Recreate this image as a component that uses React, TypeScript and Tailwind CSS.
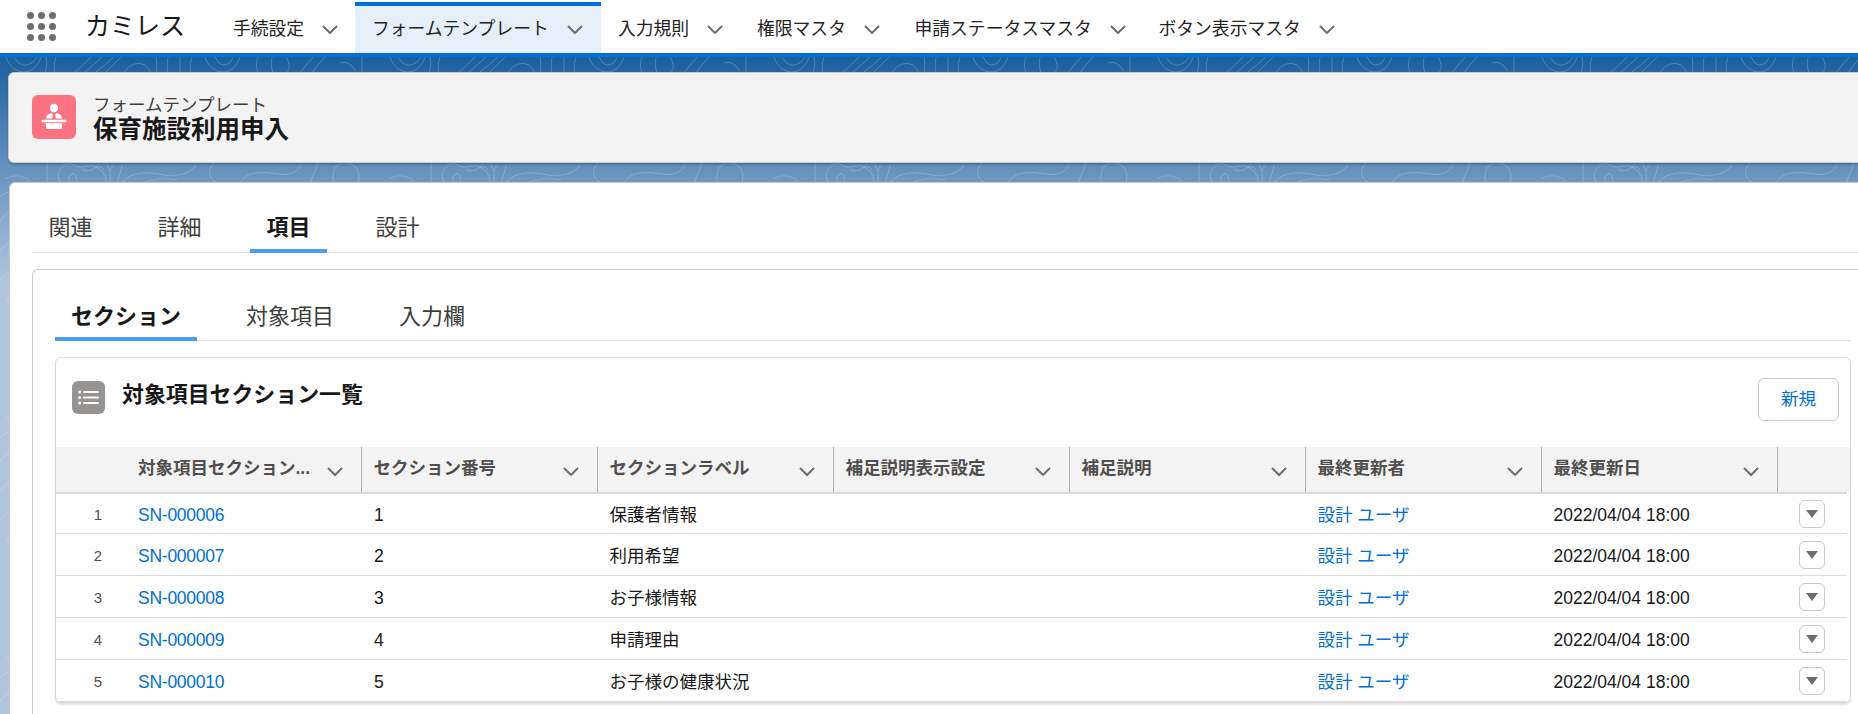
const navItems = [
  { label: "手続設定", cls: "w-[140px] pl-[18px] gap-[18px]" },
  { label: "フォームテンプレート", cls: "w-[246px] pl-[17px] gap-[18px]" },
  { label: "入力規則", cls: "w-[138px] pl-[17px] gap-[18px]" },
  { label: "権限マスタ", cls: "w-[157.500px] pl-[18px] gap-[18px]" },
  { label: "申請ステータスマスタ", cls: "w-[244px] pl-[18px] gap-[18px]" },
  { label: "ボタン表示マスタ", cls: "w-[211px] pl-[18px] gap-[18px]" },
];
const columns = ["セクション番号", "セクションラベル", "補足説明表示設定", "補足説明", "最終更新者", "最終更新日"];
const rows = [
  { no: 1, id: "SN-000006", num: "1", label: "保護者情報" },
  { no: 2, id: "SN-000007", num: "2", label: "利用希望" },
  { no: 3, id: "SN-000008", num: "3", label: "お子様情報" },
  { no: 4, id: "SN-000009", num: "4", label: "申請理由" },
  { no: 5, id: "SN-000010", num: "5", label: "お子様の健康状況" },
];

const gridCols = "grid grid-cols-[72px_234px_repeat(6,236px)_1fr]";

function Chevron() {
  return (
    <svg width="16" height="9" viewBox="0 0 16 9" fill="none" className="shrink-0">
      <path d="M1 1l7 7 7-7" stroke="#706e6b" strokeWidth="2" />
    </svg>
  );
}

function Background() {
  return (
    <svg className="absolute inset-0 w-full h-full pointer-events-none">
      <defs>
        <pattern id="contour" x="0" y="57" width="384" height="240" patternUnits="userSpaceOnUse">
          <g fill="none" stroke="#fff" strokeOpacity="0.2" strokeWidth="1">
            <path d="M6 0c3 9 10 15 18 15S38 9 41 0M14 0c3 5 6 8 11 8s9-3 12-8" />
            <path d="M46 0c1 6 1 11-1 16M56 0c-2 5-2 10-1 16" />
            <path d="M74 16c7-6 12-11 17-16M84 16c7-6 12-11 18-16M95 16c7-6 13-11 19-16M105 16c6-6 11-11 16-16" />
            <path d="M124 16c4-7 11-11 18-9 4 1 7 5 9 9" />
            <path d="M156 0c1 6 1 11 0 16M168 0c-1 6-1 11 0 16M180 0v16M192 0c-2 6-2 11-1 16" />
            <path d="M205 0c3 9 10 15 18 15s14-6 17-15M215 0c3 5 5 8 9 8s7-3 9-8" />
            <path d="M258 0c-2 6-2 11 0 16M272 0c-1 6-1 11 1 16M286 0c4 6 4 11 1 16" />
            <path d="M300 16c5-7 9-12 14-16M312 16c4-6 8-11 13-16M340 6c6-2 12 1 15 8M362 0v16" />
            <path d="M47 106v20M60 126c-4-8 0-18 8-19 5-1 9 4 14 3 6-1 10-2 14 0 8 4 12 12 9 18M70 126c-3-5 0-10 4-9 3 1 1 5 4 9" />
            <path d="M82 112c4 3 9 2 13-1s8-1 9 3" />
            <path d="M107 108l3 6 3-6M110 114v12M122 108c-1 6-3 12-5 18" />
            <path d="M122 126c6-9 20-12 36-9 16 3 30 2 38-9M145 126c8-5 20-5 32-3M5 122c8-5 20-4 27 4" />
            <path d="M214 106c-8 8-4 18 4 20M240 126c4-8 14-12 30-10s24 4 32-9M318 106l-8 20M334 126c-3-8 0-18 8-20 10-2 20 6 16 20" />
            <path d="M0 140c10-8 22-10 32-2M0 165c6-10 14-14 20-20M0 195c5-8 10-12 18-14M0 222c8-6 15-12 28-28" />
          </g>
        </pattern>
      </defs>
      <rect width="100%" height="100%" fill="url(#contour)" />
    </svg>
  );
}

export default function App() {
  return (
    <div className="relative h-screen overflow-hidden bg-[linear-gradient(180deg,#1b5f9e_57px,#b0c4df_280px)] [font-family:'Liberation_Sans','Noto_Sans_CJK_JP',sans-serif] text-[17.5px] text-[#181818]">
      <Background />

      <div className="relative">
        {/* App bar */}
        <div className="flex h-[57px] bg-white border-b-4 border-[#0070d2]">
          <div className="ml-[27px] mt-[12px] grid grid-cols-3 gap-[4px] w-[29px] h-[29px]">
            {Array.from({ length: 9 }).map((_, i) => (
              <span key={i} className="w-[7px] h-[7px] rounded-full bg-[#706e6b]" />
            ))}
          </div>
          <div className="ml-[29px] w-[100px] h-[53px] flex items-center text-[25px] text-[#181818] whitespace-nowrap">カミレス</div>
          <div className="ml-[30px] flex">
            {navItems.map((item, i) => (
              <div
                key={item.label}
                className={`flex items-center mt-[2px] border-t-4 ${item.cls} ${
                  i === 1 ? "border-[#0070d2] bg-[#e5eff9]" : "border-transparent"
                }`}
              >
                <span className="text-[#222] text-[17.800px] whitespace-nowrap">{item.label}</span>
                <Chevron />
              </div>
            ))}
          </div>
        </div>

        {/* Record header */}
        <div className="ml-2 mt-[15px] h-[91px] flex items-center pl-[23px] bg-[#f3f3f3] border border-r-0 border-[#c9c9c9] rounded-l-md shadow-[0_2px_2px_rgba(0,0,0,0.2)]">
          <div className="w-[44px] h-[44px] mb-[2px] rounded-md bg-[#fb7381] flex items-center justify-center">
            <svg width="26" height="27" viewBox="0 0 26 27" fill="#fff">
              <circle cx="13" cy="5" r="4.200" />
              <path d="M5 15.500c0-3.600 2.800-5 5.800-5.300l1.200 1.800-.9 3.500H5zM21 15.500c0-3.600-2.800-5-5.800-5.300l-1.200 1.800.9 3.500H21z" />
              <rect x="0.500" y="16.800" width="25" height="2.500" rx="1.200" />
              <path d="M4.500 20.300h17l-1 5.700h-15z" />
            </svg>
          </div>
          <div className="ml-[17px]">
            <div className="leading-[22px] text-[#3e3e3c] pt-[2px]">フォームテンプレート</div>
            <div className="leading-[28px] text-[24.500px] font-bold">保育施設利用申入</div>
          </div>
        </div>

        {/* Main card */}
        <div className="ml-[9px] mt-[19px] h-[540px] bg-white border-t border-l border-[#c9c9c9] rounded-tl-md pl-[22px]">
          <div className="h-[70px] flex items-end gap-8 border-b border-[#e0e0e0] text-[22px] text-[#3e3e3c]">
            {["関連", "詳細", "項目", "設計"].map((tab) => (
              <div
                key={tab}
                className={`h-[50px] w-[77px] flex justify-center pt-[8px] -mb-px border-b-4 ${
                  tab === "項目" ? "border-[#4b9bf5] font-bold text-[#181818]" : "border-transparent"
                }`}
              >
                {tab}
              </div>
            ))}
          </div>

          <div className="mt-[16px] h-[460px] -mr-6 bg-white border-t border-l border-[#c9c9c9] rounded-tl-md pl-[22px] pr-[31px]">
            <div className="h-[71px] flex items-end gap-[33px] border-b border-[#e0e0e0] text-[22px] text-[#3e3e3c]">
              {["セクション", "対象項目", "入力欄"].map((tab) => (
                <div
                  key={tab}
                  className={`h-[50px] px-4 flex pt-[9px] -mb-px border-b-4 ${
                    tab === "セクション" ? "border-[#4b9bf5] font-bold text-[#181818]" : "border-transparent"
                  }`}
                >
                  {tab}
                </div>
              ))}
            </div>

            {/* Related list */}
            <div className="mt-[16px] border border-[#dddbda] rounded-md shadow-[0_2px_2px_rgba(0,0,0,0.12)]">
              <div className="h-[89px] flex justify-between pl-4 pr-[11px]">
                <div className="flex mt-[23px] h-[33px]">
                  <div className="w-[33px] h-[33px] rounded-md bg-[#969492] flex items-center justify-center">
                    <svg width="21" height="15" viewBox="0 0 21 15" fill="#fff">
                      <circle cx="1.600" cy="2" r="1.500" />
                      <circle cx="1.600" cy="7.500" r="1.500" />
                      <circle cx="1.600" cy="13" r="1.500" />
                      <rect x="5" y="1" width="16" height="2" rx="1" />
                      <rect x="5" y="6.500" width="16" height="2" rx="1" />
                      <rect x="5" y="12" width="16" height="2" rx="1" />
                    </svg>
                  </div>
                  <div className="ml-[17px] text-[21.900px] font-bold leading-[27px]">対象項目セクション一覧</div>
                </div>
                <button className="mt-[20px] w-[81px] h-[43px] bg-white border border-[#c9c9c9] rounded-md text-[#0070d2]">新規</button>
              </div>

              <div className={`${gridCols} h-[45px] items-center bg-[#f3f3f3] font-bold text-[#514f4d]`}>
                <div />
                <div className="h-full flex items-center pl-[10px] pr-[18px] gap-[14px] border-r border-[#b0adab]">
                  <span className="flex-1 min-w-0 whitespace-nowrap mb-[3px]">対象項目セクション...</span>
                  <span className="mt-[3px]"><Chevron /></span>
                </div>
                {columns.map((c) => (
                  <div key={c} className="h-full flex items-center justify-between pl-[11.500px] pr-[18px] border-r border-[#b0adab]">
                    <span className="whitespace-nowrap mb-[3px]">{c}</span>
                    <span className="mt-[3px]"><Chevron /></span>
                  </div>
                ))}
                <div />
              </div>

              <div className="border-t-2 border-[#dddbda] mr-[3px]">
                {rows.map((r, i) => (
                  <div key={r.id} className={`${gridCols} ${i === 0 ? "h-[40px]" : "h-[42px]"} pt-[4px] items-center border-b border-[#dddbda]`}>
                    <div className="pr-[26px] text-right text-[15px] text-[#514f4d]">{r.no}</div>
                    <div className="pl-[10px] text-[#0070d2] tracking-[-0.25px]">{r.id}</div>
                    <div className="pl-3">{r.num}</div>
                    <div className="pl-[11.500px]">{r.label}</div>
                    <div />
                    <div />
                    <div className="pl-[11.500px] text-[#0070d2]">設計 ユーザ</div>
                    <div className="pl-[11.500px]">2022/04/04 18:00</div>
                    <div className="pl-[21px] -mt-[3px]">
                      <div className="w-[26px] h-[28px] flex items-center justify-center bg-white border border-[#c9c9c9] rounded-md">
                        <svg width="12" height="8" viewBox="0 0 12 8" fill="#706e6b">
                          <path d="M0 0h12L6 8z" />
                        </svg>
                      </div>
                    </div>
                  </div>
                ))}
              </div>
            </div>
          </div>
        </div>
      </div>
    </div>
  );
}
